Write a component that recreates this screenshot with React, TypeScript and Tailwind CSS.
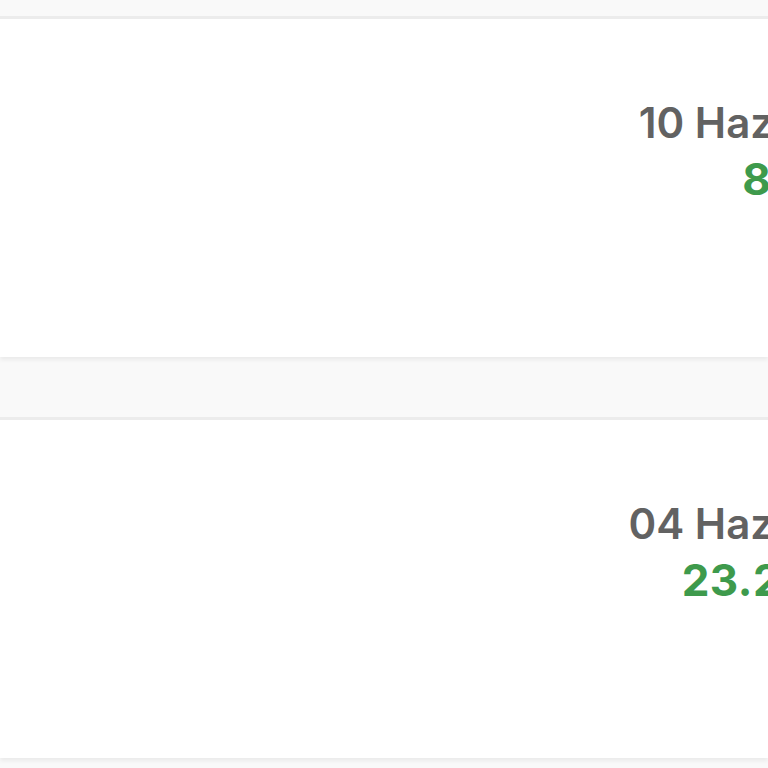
import React from "react";

interface Payment {
  date: string;
  amount: string;
}

const payments: Payment[] = [
  { date: "10 Haz 2024", amount: "85,00 ₺" },
  { date: "04 Haz 2024", amount: "23.250,00" },
];

function PaymentCard({ payment }: { payment: Payment }) {
  return (
    <div className="h-[341px] bg-white border-t-[3px] border-[#ececec] shadow-[0_3px_4px_rgba(0,0,0,0.06)] flex justify-end">
      <div className="mt-[80px] -mr-[124px] flex flex-col items-end whitespace-nowrap font-['Inter',sans-serif]">
        <span className="text-[42px] leading-[48px] font-semibold text-[#626262]">
          {payment.date}
        </span>
        <span className="mt-[7px] -mr-[21px] text-[44px] leading-[50px] font-bold tracking-[0.5px] text-[#3e9a4c]">
          {payment.amount}
        </span>
      </div>
    </div>
  );
}

export default function App() {
  return (
    <div className="w-[768px] h-[768px] overflow-hidden bg-[#f9f9f9] pt-4 flex flex-col gap-[60px]">
      {payments.map((payment) => (
        <PaymentCard key={payment.date} payment={payment} />
      ))}
    </div>
  );
}
